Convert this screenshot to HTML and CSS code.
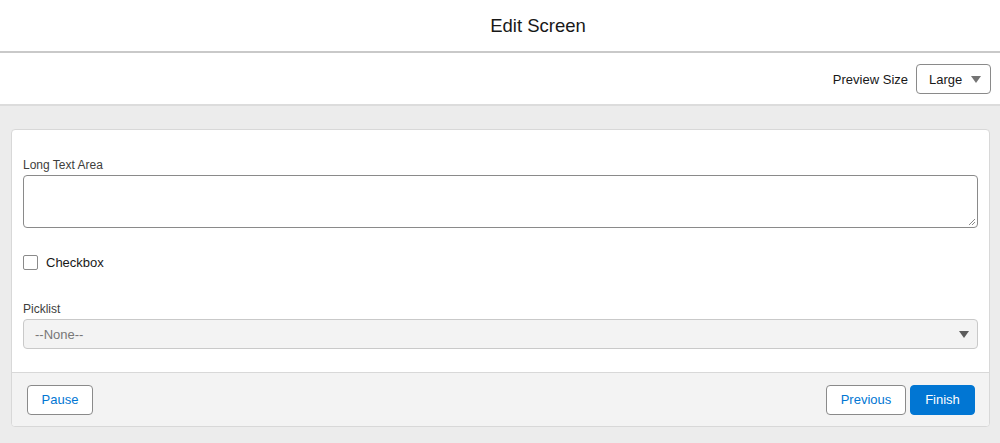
FILE: index.html
```html
<!DOCTYPE html>
<html>
<head>
<meta charset="utf-8">
<link rel="stylesheet" href="styles.css">
</head>
<body>
<div class="header"><h1 class="title">Edit Screen</h1></div>
<div class="toolbar">
  <span class="preview-label">Preview Size</span>
  <div class="size-select"><span>Large</span><span class="caret"></span></div>
</div>
<div class="canvas">
  <div class="card">
    <div class="card-body">
      <div class="field">
        <label class="label">Long Text Area</label>
        <div class="textarea">
          <svg class="grip" width="8" height="8" viewBox="0 0 8 8"><path d="M7 1 L1 7 M7 4 L4 7" stroke="#8a8a8a" stroke-width="1" fill="none"/></svg>
        </div>
      </div>
      <div class="check-row">
        <span class="checkbox"></span>
        <span class="check-label">Checkbox</span>
      </div>
      <div class="field">
        <label class="label">Picklist</label>
        <div class="picklist"><span>--None--</span><span class="caret dark"></span></div>
      </div>
    </div>
    <div class="card-footer">
      <button class="btn w-pause">Pause</button>
      <div class="footer-right">
        <button class="btn w-prev">Previous</button>
        <button class="btn brand w-finish">Finish</button>
      </div>
    </div>
  </div>
</div>
</body>
</html>
```
FILE: styles.css
```css
* { box-sizing: border-box; }
html, body { margin: 0; padding: 0; }
body {
  font-family: "Liberation Sans", Arial, sans-serif;
  color: #181818;
  background: #ececec;
  width: 1000px;
  height: 443px;
  overflow: hidden;
}
.header {
  height: 53px;
  background: #fff;
  border-bottom: 2px solid #c9c9c9;
  display: flex;
  align-items: center;
  justify-content: center;
  padding-left: 76px;
}
.title {
  margin: 0;
  font-size: 18.5px;
  font-weight: 400;
  color: #181818;
}
.toolbar {
  height: 53px;
  background: #fff;
  border-bottom: 2px solid #dcdcdc;
  display: flex;
  align-items: center;
  justify-content: flex-end;
  padding-right: 9px;
  padding-top: 1px;
}
.preview-label {
  font-size: 13px;
  color: #181818;
  margin-right: 8px;
}
.size-select {
  width: 75px;
  height: 30px;
  border: 1px solid #8a8a8a;
  border-radius: 4px;
  display: flex;
  align-items: center;
  justify-content: space-between;
  padding: 0 9px 0 12px;
  font-size: 13px;
}
.caret {
  width: 0;
  height: 0;
  border-left: 5px solid transparent;
  border-right: 5px solid transparent;
  border-top: 7px solid #747474;
}
.caret.dark { border-top-color: #5c5c5c; }
.canvas {
  padding: 23px 10px 0 11px;
}
.card {
  background: #fff;
  border: 1px solid #d8d8d8;
  border-radius: 4px;
  overflow: hidden;
}
.card-body {
  padding: 27px 11px 23px 11px;
}
.field { display: flex; flex-direction: column; }
.label {
  font-size: 12px;
  color: #3e3e3c;
  line-height: 16px;
  margin-bottom: 2px;
}
.textarea {
  height: 53px;
  border: 1px solid #8a8a8a;
  border-radius: 4px;
  position: relative;
}
.grip { position: absolute; right: 1px; bottom: 1px; }
.check-row {
  display: flex;
  align-items: center;
  margin: 26px 0 31px 0;
  height: 16px;
}
.checkbox {
  width: 15px;
  height: 15px;
  border: 1px solid #8a8a8a;
  border-radius: 2px;
  margin-right: 8px;
}
.check-label { font-size: 13px; color: #181818; }
.picklist {
  height: 30px;
  background: #f3f3f3;
  border: 1px solid #c9c9c9;
  border-radius: 4px;
  display: flex;
  align-items: center;
  justify-content: space-between;
  padding: 0 8px 0 11px;
  font-size: 13px;
  color: #777;
}
.card-footer {
  background: #f3f3f3;
  border-top: 1px solid #d8d8d8;
  height: 54px;
  display: flex;
  align-items: center;
  justify-content: space-between;
  padding: 0 14px 0 15px;
}
.footer-right { display: flex; gap: 4px; }
.btn {
  height: 30px;
  padding: 0;
  border: 1px solid #8a8a8a;
  border-radius: 4px;
  background: #fff;
  color: #0176d3;
  font-family: "Liberation Sans", Arial, sans-serif;
  font-size: 13px;
  text-align: center;
}
.w-pause { width: 66px; }
.w-prev { width: 80px; }
.w-finish { width: 65px; }
.btn.brand {
  background: #0176d3;
  border-color: #0176d3;
  color: #fff;
}
```
